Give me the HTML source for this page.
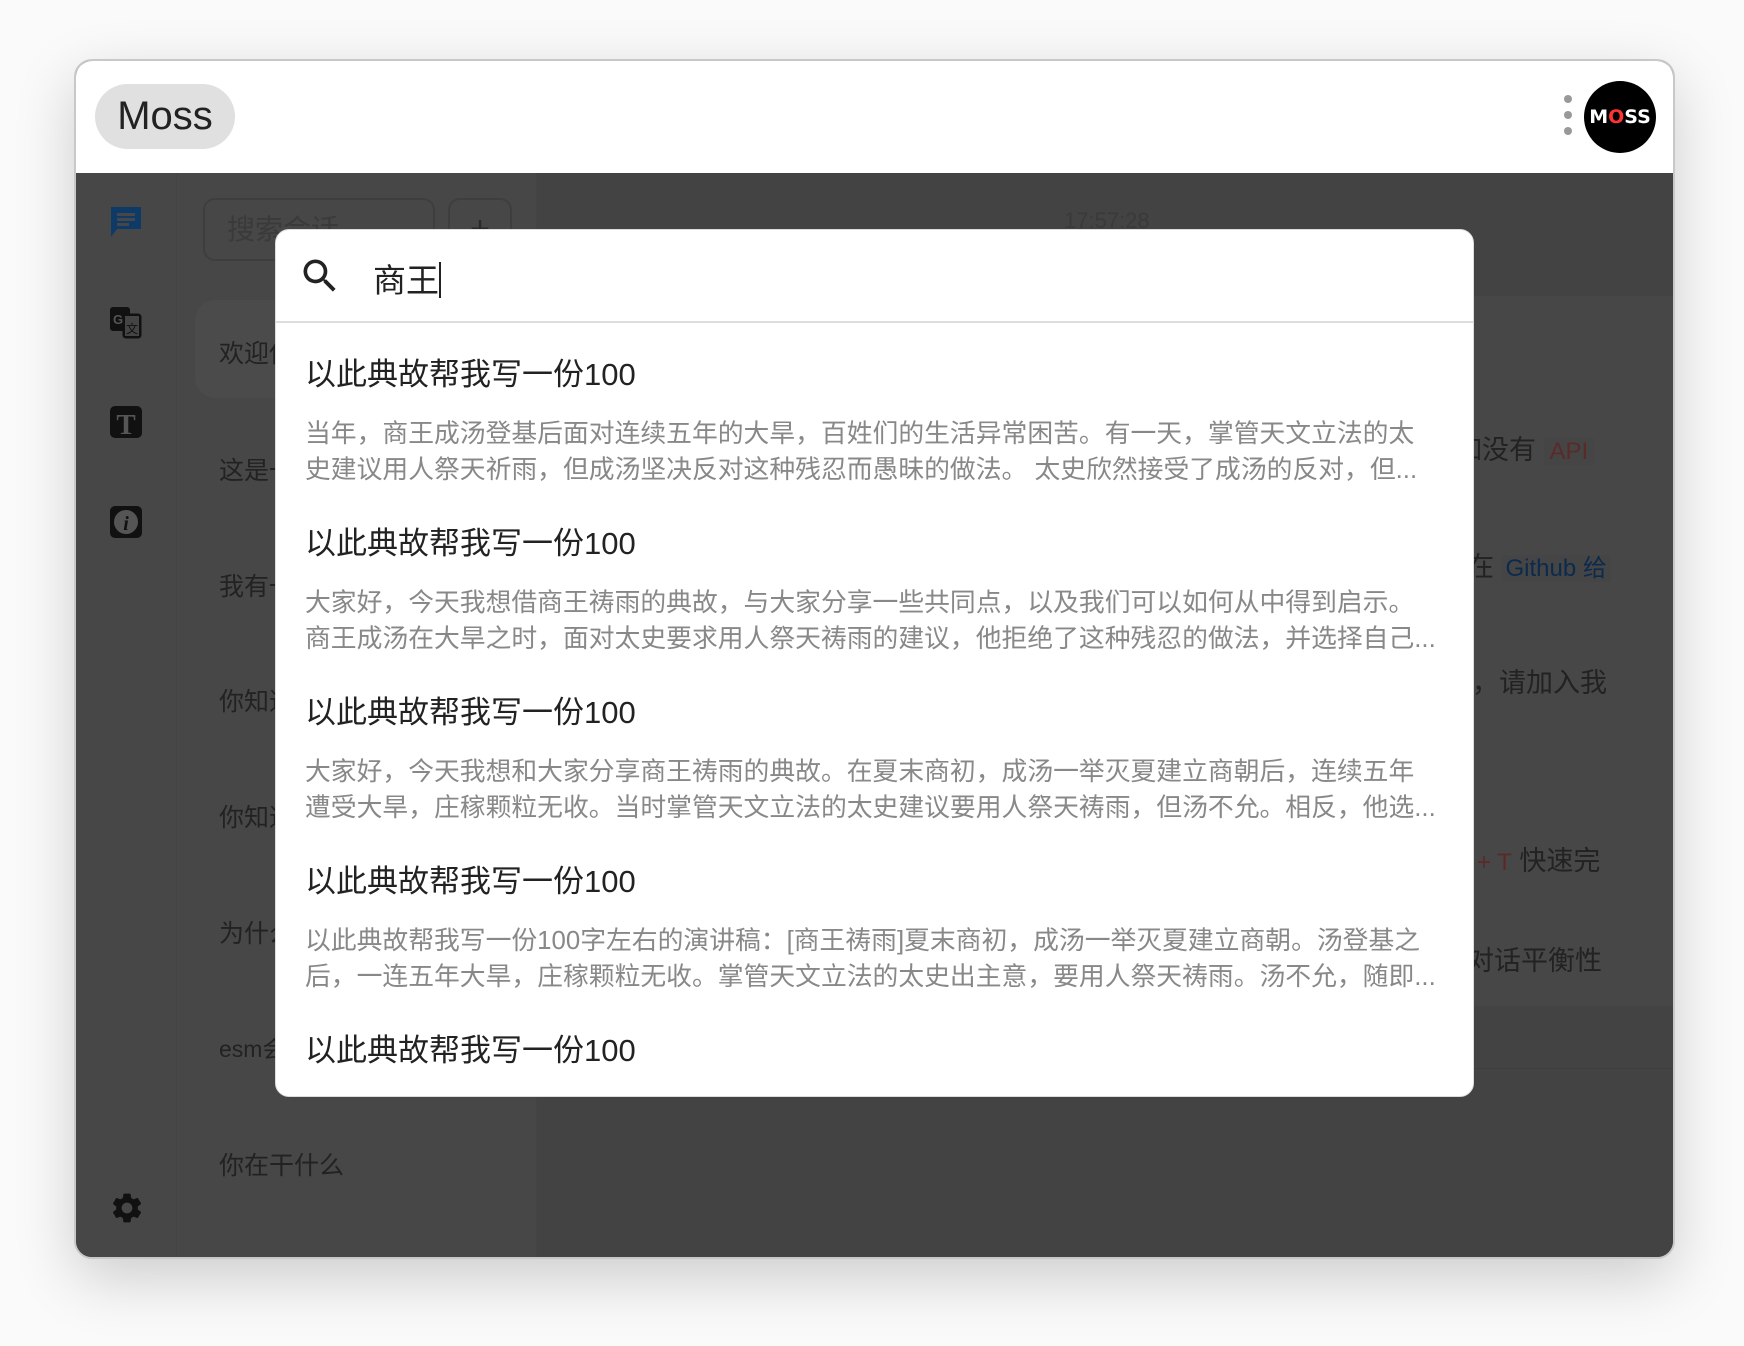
<!DOCTYPE html>
<html><head><meta charset="utf-8"><style>
*{margin:0;padding:0;box-sizing:border-box}
body{width:1744px;height:1346px;background:#fafafa;font-family:"Liberation Sans","Noto Sans CJK SC",sans-serif;position:relative;overflow:hidden}
.win{position:absolute;left:74px;top:59px;width:1601px;height:1200px;border:2px solid #c8c8c8;border-radius:18px;overflow:hidden;background:#424242;box-shadow:0 20px 60px rgba(0,0,0,.18)}
.hdr{position:absolute;left:0;top:0;right:0;height:112px;background:#fff}
.pill{position:absolute;left:19px;top:23px;width:140px;height:65px;border-radius:33px;background:#e0e0e0;font-size:40px;color:#222;text-align:center;line-height:65px;font-family:"Liberation Sans",sans-serif}
.dots{position:absolute;left:1488px;top:34px}
.dots i{display:block;width:8px;height:8px;border-radius:50%;background:#999;margin-bottom:8px}
.av{position:absolute;left:1508px;top:20px;width:72px;height:72px;border-radius:50%;background:#000;color:#fff;font:bold 19px "DejaVu Sans",sans-serif;text-align:center;line-height:72px;letter-spacing:0}
.av b{color:#f33}
.side{position:absolute;left:0;top:112px;width:101px;bottom:0;background:#474747;border-right:1px solid #444}
.list{position:absolute;left:101px;top:112px;width:360px;bottom:0;background:#474747;border-right:1px solid #444}
.main{position:absolute;left:461px;top:112px;right:0;bottom:0;background:#434343}
.ic{position:absolute;left:33px}
.srch{position:absolute;left:26px;top:25px;width:232px;height:63px;border:2px solid #3e3e3e;border-radius:12px;color:#3a3a3a;font-size:28px;line-height:60px;padding-left:22px}
.plus{position:absolute;left:271px;top:25px;width:64px;height:63px;border:2px solid #3e3e3e;border-radius:12px;color:#2a2a2a;font-size:34px;text-align:center;line-height:58px}
.sel{position:absolute;left:18px;top:127px;width:330px;height:98px;border-radius:20px;background:#4b4b4b}
.li{position:absolute;left:42px;font-size:25px;color:#222;white-space:nowrap}
.rt{position:absolute;font-size:27px;color:#222;white-space:nowrap}
.modal{position:absolute;left:275px;top:229px;width:1199px;height:868px;background:#fff;border-radius:14px;border:1px solid #ddd;overflow:hidden}
.q{position:absolute;left:97px;top:24px;font-size:33px;color:#222}
.q:after{content:"";display:inline-block;width:2px;height:36px;background:#222;vertical-align:-6px}
.div{position:absolute;left:0;right:0;top:91px;height:2px;background:#ddd}
.it{position:absolute;left:29px;width:1150px}
.t{font-size:31px;color:#222;line-height:40px}
.b{font-size:25.8px;color:#888;line-height:35.5px;margin-top:22px;white-space:nowrap;overflow:hidden}
</style></head><body>
<div class="win">
 <div class="hdr">
  <div class="pill">Moss</div>
  <div class="dots"><i></i><i></i><i></i></div>
  <div class="av">M<b>O</b>SS</div>
 </div>
 <div class="side">
  <svg class="ic" style="top:32px" width="34" height="34" viewBox="0 0 34 34"><path d="M2 2h30v22H8l-6 8z" fill="#0d3a66"/><rect x="8" y="8" width="18" height="3" fill="#474747"/><rect x="8" y="13" width="18" height="3" fill="#474747"/><rect x="8" y="18" width="12" height="3" fill="#474747"/></svg>
  <svg class="ic" style="top:133px" width="34" height="34" viewBox="0 0 34 34"><rect x="1" y="1" width="20" height="24" rx="3" fill="#111"/><rect x="14" y="8" width="18" height="24" rx="3" fill="#111" stroke="#111"/><rect x="16" y="10" width="14" height="20" fill="#444"/><text x="4" y="18" font-size="13" font-weight="bold" fill="#555" font-family="Liberation Sans">G</text><text x="17" y="27" font-size="12" fill="#111" font-family="Noto Sans CJK SC">文</text></svg>
  <svg class="ic" style="top:232px" width="34" height="34" viewBox="0 0 34 34"><rect x="1" y="1" width="32" height="32" rx="5" fill="#111"/><text x="17" y="29" font-size="29" text-anchor="middle" fill="#555" font-family="Liberation Serif" font-weight="bold">T</text></svg>
  <svg class="ic" style="top:332px" width="34" height="34" viewBox="0 0 34 34"><rect x="1" y="1" width="32" height="32" rx="5" fill="#111"/><circle cx="17" cy="17" r="12" fill="#555"/><text x="17" y="25" font-size="20" text-anchor="middle" fill="#111" font-family="Liberation Serif" font-style="italic" font-weight="bold">i</text></svg>
  <svg class="ic" style="top:1017px" width="36" height="36" viewBox="0 0 24 24"><path fill="#111" d="M19.14 12.94c.04-.3.06-.61.06-.94s-.02-.64-.07-.94l2.03-1.58a.49.49 0 0 0 .12-.61l-1.92-3.32a.488.488 0 0 0-.59-.22l-2.39.96c-.5-.38-1.03-.7-1.620-.94l-.36-2.54a.484.484 0 0 0-.48-.41h-3.84c-.24 0-.43.17-.47.41l-.36 2.54c-.59.24-1.13.57-1.62.94l-2.39-.96c-.22-.08-.47 0-.59.22L2.74 8.87c-.12.21-.08.47.12.61l2.03 1.58c-.05.3-.09.63-.09.94s.02.64.07.94l-2.03 1.58a.49.49 0 0 0-.12.61l1.92 3.32c.12.22.37.29.59.22l2.39-.96c.5.38 1.03.7 1.62.94l.36 2.54c.05.24.24.41.48.41h3.84c.24 0 .44-.17.47-.41l.36-2.54c.59-.24 1.13-.56 1.62-.94l2.39.96c.22.08.47 0 .59-.22l1.92-3.32c.12-.22.07-.47-.12-.61l-2.010-1.58zM12 15.6c-1.98 0-3.6-1.62-3.6-3.6s1.62-3.6 3.6-3.6 3.6 1.62 3.6 3.6-1.62 3.6-3.6 3.6z"/></svg>
 </div>
 <div class="list">
  <div class="srch">搜索会话</div>
  <div class="plus">+</div>
  <div class="sel"></div>
  <div class="li" style="top:161px">欢迎使用</div>
  <div class="li" style="top:278px">这是一个</div>
  <div class="li" style="top:394px">我有一个</div>
  <div class="li" style="top:509px">你知道吗</div>
  <div class="li" style="top:625px">你知道吗</div>
  <div class="li" style="top:741px">为什么</div>
  <div class="li" style="top:857px;font-size:23px">esm会话</div>
  <div class="li" style="top:973px">你在干什么</div>
 </div>
 <div class="main">
  <div style="position:absolute;left:527px;top:35px;font-size:22px;color:#3a3a3a">17:57:28</div>
  <div style="position:absolute;left:560px;top:123px;width:1036px;height:710px;border-radius:30px;background:#474747"></div>
  <div style="position:absolute;left:0;right:0;top:895px;height:1px;background:#3e3e3e"></div>
  <div class="rt" style="left:918px;top:255px">如没有 <span style="color:#5a2a2a;background:#454545;font-size:24px;padding:0 6px">API</span></div>
  <div class="rt" style="left:930px;top:372px">在 <span style="color:#0c2a4c;background:#454545;font-size:24px;padding:0 4px">Github 给</span></div>
  <div class="rt" style="left:935px;top:488px">，请加入我</div>
  <div class="rt" style="left:940px;top:666px"><span style="color:#5a2a2a;font-size:24px">+ T</span> 快速完</div>
  <div class="rt" style="left:930px;top:766px">对话平衡性</div>
 </div>
</div>
<div class="modal">
 <svg style="position:absolute;left:22px;top:24px" width="44" height="44" viewBox="0 0 24 24"><path fill="#222" d="M15.5 14h-.79l-.28-.27A6.47 6.47 0 0 0 16 9.5 6.5 6.5 0 1 0 9.5 16c1.61 0 3.09-.59 4.23-1.57l.27.28v.79l5 4.99L20.49 19l-4.99-5zm-6 0C7.01 14 5 11.990 5 9.5S7.01 5 9.5 5 14 7.01 14 9.5 11.99 14 9.5 14z"/></svg>
 <div class="q">商王</div>
 <div class="div"></div>
 <div class="it" style="top:125px"><div class="t">以此典故帮我写一份100</div><div class="b">当年，商王成汤登基后面对连续五年的大旱，百姓们的生活异常困苦。有一天，掌管天文立法的太</div><div class="b" style="margin-top:0">史建议用人祭天祈雨，但成汤坚决反对这种残忍而愚昧的做法。 太史欣然接受了成汤的反对，但...</div></div>
 <div class="it" style="top:294px"><div class="t">以此典故帮我写一份100</div><div class="b">大家好，今天我想借商王祷雨的典故，与大家分享一些共同点，以及我们可以如何从中得到启示。</div><div class="b" style="margin-top:0">商王成汤在大旱之时，面对太史要求用人祭天祷雨的建议，他拒绝了这种残忍的做法，并选择自己...</div></div>
 <div class="it" style="top:463px"><div class="t">以此典故帮我写一份100</div><div class="b">大家好，今天我想和大家分享商王祷雨的典故。在夏末商初，成汤一举灭夏建立商朝后，连续五年</div><div class="b" style="margin-top:0">遭受大旱，庄稼颗粒无收。当时掌管天文立法的太史建议要用人祭天祷雨，但汤不允。相反，他选...</div></div>
 <div class="it" style="top:632px"><div class="t">以此典故帮我写一份100</div><div class="b">以此典故帮我写一份100字左右的演讲稿：[商王祷雨]夏末商初，成汤一举灭夏建立商朝。汤登基之</div><div class="b" style="margin-top:0">后，一连五年大旱，庄稼颗粒无收。掌管天文立法的太史出主意，要用人祭天祷雨。汤不允，随即...</div></div>
 <div class="it" style="top:801px"><div class="t">以此典故帮我写一份100</div></div>
</div>
</body></html>
